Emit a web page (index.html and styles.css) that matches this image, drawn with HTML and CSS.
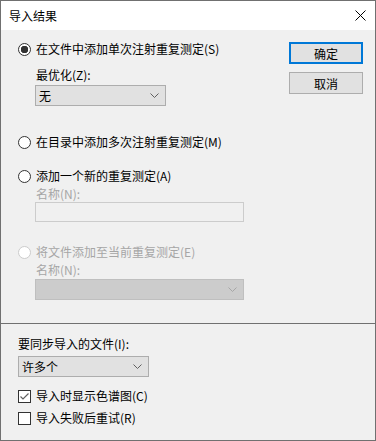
FILE: index.html
```html
<!DOCTYPE html>
<html lang="zh-CN">
<head>
  <meta charset="UTF-8">
  <title>导入结果</title>
  <link rel="stylesheet" href="styles.css">
</head>
<body>
  <div class="dialog">
    <div class="titlebar">
      <span class="title">导入结果</span>
      <svg class="close" width="11" height="11" viewBox="0 0 11 11">
        <path d="M0.5 0.5L10.5 10.5M10.5 0.5L0.5 10.5" stroke="#000" stroke-width="1" fill="none"/>
      </svg>
    </div>

    <div class="main">
      <div class="options">
        <div class="option"><span class="radio checked"></span>在文件中添加单次注射重复测定(S)</div>
        <div class="label sub gap-10">最优化(Z):</div>
        <div class="combo sub w-131 gap-2">
          <span>无</span>
          <svg width="9" height="5" viewBox="0 0 9 5"><path d="M0.5 0.5L4.5 4.5L8.5 0.5" stroke="#606060" fill="none"/></svg>
        </div>

        <div class="option gap-28"><span class="radio"></span>在目录中添加多次注射重复测定(M)</div>

        <div class="option gap-18"><span class="radio"></span>添加一个新的重复测定(A)</div>
        <div class="label sub disabled gap-2">名称(N):</div>
        <input class="textbox sub" type="text" disabled>

        <div class="option disabled gap-22"><span class="radio off"></span>将文件添加至当前重复测定(E)</div>
        <div class="label sub disabled gap-2">名称(N):</div>
        <div class="combo sub off w-209 gap-1">
          <span></span>
          <svg width="9" height="5" viewBox="0 0 9 5"><path d="M0.5 0.5L4.5 4.5L8.5 0.5" stroke="#a6a6a6" fill="none"/></svg>
        </div>
      </div>

      <div class="buttons">
        <button class="btn default">确定</button>
        <button class="btn">取消</button>
      </div>
    </div>

    <div class="bottom">
      <div class="label">要同步导入的文件(I):</div>
      <div class="combo w-131 gap-4">
        <span>许多个</span>
        <svg width="9" height="5" viewBox="0 0 9 5"><path d="M0.5 0.5L4.5 4.5L8.5 0.5" stroke="#606060" fill="none"/></svg>
      </div>
      <div class="option gap-11">
        <span class="check">
          <svg width="11" height="11" viewBox="0 0 11 11"><path d="M1.5 5.5L4 8L9.5 2.5" stroke="#606060" stroke-width="1.2" fill="none"/></svg>
        </span>导入时显示色谱图(C)
      </div>
      <div class="option gap-6"><span class="check"></span>导入失败后重试(R)</div>
    </div>
  </div>
</body>
</html>
```

FILE: styles.css
```css
body {
  margin: 0;
  font-family: "Noto Sans CJK SC", "Noto Sans", sans-serif;
  font-size: 12px;
  color: #000;
  background: #fff;
}
.dialog {
  width: 376px;
  height: 441px;
  box-sizing: border-box;
  border: 1px solid #707070;
  background: #f0f0f0;
  display: flex;
  flex-direction: column;
}
.titlebar {
  height: 29px;
  background: #fff;
  display: flex;
  align-items: center;
  justify-content: space-between;
  padding: 0 9px 0 8px;
}
.title {
  line-height: 16px;
}
.main {
  display: flex;
  border-bottom: 1px solid #707070;
}
.options {
  flex: 1;
  display: flex;
  flex-direction: column;
  align-items: flex-start;
  padding: 11px 0 23px 17px;
}
.buttons {
  display: flex;
  flex-direction: column;
  gap: 8px;
  padding: 12px 12px 0 0;
}
.btn {
  width: 74px;
  height: 22px;
  box-sizing: border-box;
  border: 1px solid #adadad;
  background: #e1e1e1;
  font-family: inherit;
  font-size: 12px;
  padding: 0;
  color: #000;
}
.btn.default {
  border: 2px solid #0078d7;
}
.option {
  display: flex;
  align-items: center;
  gap: 5px;
  height: 16px;
  line-height: 16px;
}
.label {
  height: 16px;
  line-height: 16px;
}
.sub {
  margin-left: 17px;
}
.label.sub {
  margin-left: 18px;
}
.disabled {
  color: #a6a6a6;
}
.radio {
  width: 13px;
  height: 13px;
  box-sizing: border-box;
  border: 1px solid #333;
  border-radius: 50%;
  background: #fff;
  flex: none;
}
.radio.checked {
  background: radial-gradient(circle, #333 0 3.5px, #fff 4px);
}
.radio.off {
  border-color: #cccccc;
}
.check {
  width: 13px;
  height: 13px;
  box-sizing: border-box;
  border: 1px solid #333;
  background: #fff;
  flex: none;
  display: flex;
  align-items: center;
  justify-content: center;
}
.check svg {
  display: block;
}
.combo {
  height: 21px;
  box-sizing: border-box;
  border: 1px solid #adadad;
  background: #e1e1e1;
  display: flex;
  align-items: center;
  justify-content: space-between;
  padding: 0 6px 0 3px;
}
.combo.off {
  background: #cccccc;
  border-color: #bfbfbf;
}
.textbox {
  width: 209px;
  height: 20px;
  box-sizing: border-box;
  border: 1px solid #cccccc;
  background: #f0f0f0;
  margin-top: 0;
  padding: 0;
}
.w-131 { width: 131px; }
.w-209 { width: 209px; }
.gap-1 { margin-top: 1px; }
.gap-2 { margin-top: 2px; }
.gap-4 { margin-top: 4px; }
.gap-6 { margin-top: 6px; }
.gap-10 { margin-top: 10px; }
.gap-11 { margin-top: 11px; }
.gap-18 { margin-top: 18px; }
.gap-22 { margin-top: 22px; }
.gap-28 { margin-top: 28px; }
.bottom {
  display: flex;
  flex-direction: column;
  align-items: flex-start;
  padding: 12px 0 0 17px;
}
```
